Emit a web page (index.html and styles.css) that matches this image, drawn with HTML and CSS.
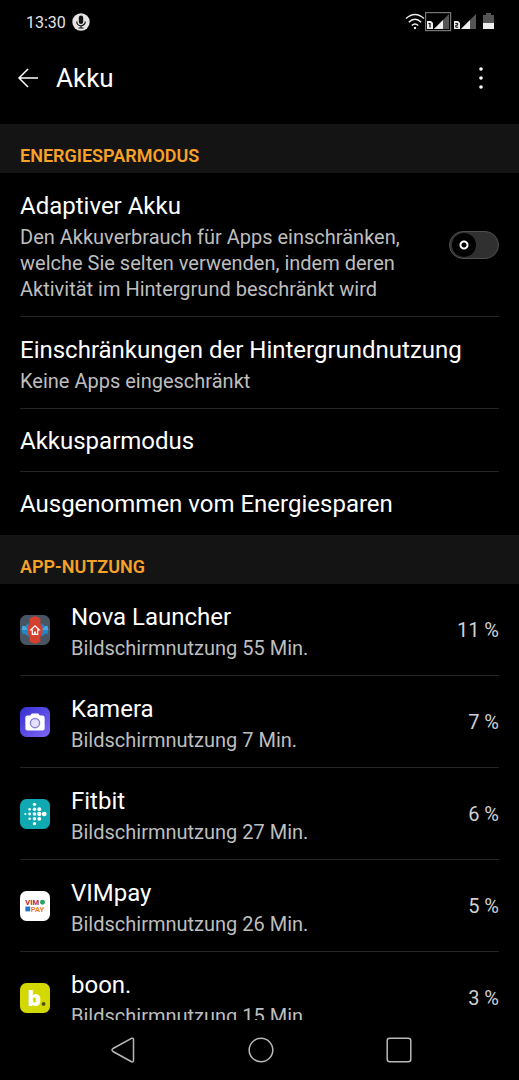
FILE: index.html
```html
<!DOCTYPE html>
<html lang="de">
<head>
    <meta charset="UTF-8">
    <meta name="viewport" content="width=device-width, initial-scale=1">
    <title>Akku</title>
    <link rel="stylesheet" href="styles.css">
</head>
<body>
<div class="status">
    <span class="status_time">13:30</span>
    <svg class="status_mic" width="18" height="18" viewBox="0 0 18 18">
        <circle cx="9" cy="9" r="8.7" fill="#e4e4e4"/>
        <rect x="6.8" y="2.5" width="4.4" height="8.5" rx="2.2" fill="#111"/>
        <path d="M4.7 8.5a4.3 4.3 0 0 0 8.6 0M9 12.8v2.4M6.5 15h5" fill="none" stroke="#111" stroke-width="1.2"/>
    </svg>
    <svg class="status_icons" width="90" height="22" viewBox="0 0 90 22">
        <g fill="none" stroke="#eee" stroke-width="1.5">
            <path d="M1 7.500Q10 -.5 19 7.500"/>
            <path d="M3.800 11.200Q10 5.200 16.200 11.200"/>
            <path d="M6.800 14.500Q10 11.300 13.200 14.500"/>
        </g>
        <circle cx="10" cy="17" r="1.200" fill="#eee"/>
        <rect x="20.600" y="1.600" width="25" height="18" fill="none" stroke="#777" stroke-width="1.200"/>
        <path d="M44 3v15H29z" fill="#555"/>
        <path d="M38 9v9h-9z" fill="#eee"/>
        <path d="M22 10h4l2 2v6h-6z" fill="#eee"/>
        <path d="M23.500 12.500h1.500v4" fill="none" stroke="#000" stroke-width="1.200"/>
        <path d="M71 3v15H56z" fill="#555"/>
        <path d="M65 9v9h-9z" fill="#eee"/>
        <path d="M49 10h4l2 2v6h-6z" fill="#eee"/>
        <path d="M50.300 12.400h2.400v1.800h-1.900v2h2.400" fill="none" stroke="#000" stroke-width="1"/>
        <path d="M81 2h5v2h3v8H78V4h3z" fill="#555"/>
        <path d="M78 12h11v6H78z" fill="#eee"/>
    </svg>
</div>

<header class="bar">
    <button class="bar_btn" aria-label="Zurück">
        <svg width="20" height="20" viewBox="0 0 20 20">
            <path d="M10 1L1 10l9 9M1 10h19" fill="none" stroke="#fff" stroke-width="1.5"/>
        </svg>
    </button>
    <h1>Akku</h1>
    <button class="bar_btn bar_more" aria-label="Mehr">
        <svg width="4" height="22" viewBox="0 0 4 22">
            <g fill="#fff"><circle cx="2" cy="2" r="1.8"/><circle cx="2" cy="11" r="1.8"/><circle cx="2" cy="20" r="1.8"/></g>
        </svg>
    </button>
</header>

<main class="content">
    <h2>ENERGIESPARMODUS</h2>
    <ul class="list">
        <li>
            <div class="text">
                <label class="title" for="adaptive">Adaptiver Akku</label>
                <p class="sub sub_narrow">Den Akkuverbrauch für Apps einschränken, welche Sie selten verwenden, indem deren Aktivität im Hintergrund beschränkt wird</p>
            </div>
            <input class="switch" type="checkbox" id="adaptive">
        </li>
        <li>
            <div class="text">
                <span class="title">Einschränkungen der Hintergrundnutzung</span>
                <p class="sub">Keine Apps eingeschränkt</p>
            </div>
        </li>
        <li class="single"><span class="title">Akkusparmodus</span></li>
        <li class="single"><span class="title">Ausgenommen vom Energiesparen</span></li>
    </ul>

    <h2>APP-NUTZUNG</h2>
    <ul class="list">
        <li>
            <svg class="app_icon" viewBox="0 0 28 28">
                <rect width="28" height="28" rx="6" fill="#465561"/>
                <path d="M1.500 14l1-4 2 .5L8 7.500v13l-3.500-3-2 .5zM26.500 14l-1-4-2 .5L20 7.500v13l3.500-3 2 .5z" fill="#2487c8"/>
                <path d="M1.500 14l1-4 2 .5L8 14zM26.500 14l-1-4-2 .5L20 14z" fill="#4aa8df"/>
                <path d="M9 3l5-2 5 2v5l2 3v6l-2 3v5l-5 2-5-2v-5l-2-3v-6l2-3z" fill="#d5402e"/>
                <path d="M10 14l4-4 4 4h-1.500v4h-5v-4z" fill="none" stroke="#fff" stroke-width="1.1"/>
                <path d="M13.200 15.500h1.600V18h-1.600z" fill="#fff"/>
            </svg>
            <div class="text">
                <span class="title">Nova Launcher</span>
                <p class="sub">Bildschirmnutzung 55 Min.</p>
            </div>
            <span class="percent">11 %</span>
        </li>
        <li>
            <svg class="app_icon" viewBox="0 0 28 28">
                <defs>
                    <linearGradient id="cam" x1="0" y1="0" x2="1" y2="1">
                        <stop offset="0" stop-color="#3431cf"/>
                        <stop offset="1" stop-color="#8066f8"/>
                    </linearGradient>
                </defs>
                <rect width="28" height="28" rx="6" fill="url(#cam)"/>
                <path d="M7 8h2.500l1.500-2h6l1.500 2H21a2 2 0 0 1 2 2v10a2 2 0 0 1-2 2H7a2 2 0 0 1-2-2V10a2 2 0 0 1 2-2z" fill="#fff"/>
                <circle cx="14" cy="15" r="4.300" fill="#e4e2ff" stroke="#8a80dd" stroke-width="1.300"/>
            </svg>
            <div class="text">
                <span class="title">Kamera</span>
                <p class="sub">Bildschirmnutzung 7 Min.</p>
            </div>
            <span class="percent">7 %</span>
        </li>
        <li>
            <svg class="app_icon" viewBox="0 0 28 28">
                <rect width="28" height="28" rx="6" fill="#10a9b2"/>
                <g fill="#fff">
                    <circle cx="5" cy="14" r="1"/>
                    <circle cx="9" cy="9.500" r="1.200"/><circle cx="9" cy="14" r="1.300"/><circle cx="9" cy="18.500" r="1.200"/>
                    <circle cx="13.500" cy="5" r="1.500"/><circle cx="13.500" cy="9.500" r="1.600"/><circle cx="13.500" cy="14" r="1.700"/><circle cx="13.500" cy="18.500" r="1.600"/><circle cx="13.500" cy="23" r="1.500"/>
                    <circle cx="18" cy="9.500" r="1.800"/><circle cx="18" cy="14" r="2"/><circle cx="18" cy="18.500" r="1.800"/>
                    <circle cx="22.600" cy="14" r="2.200"/>
                </g>
            </svg>
            <div class="text">
                <span class="title">Fitbit</span>
                <p class="sub">Bildschirmnutzung 27 Min.</p>
            </div>
            <span class="percent">6 %</span>
        </li>
        <li>
            <svg class="app_icon" viewBox="0 0 28 28">
                <rect width="28" height="28" rx="6" fill="#fff"/>
                <text class="vim" x="5" y="13" fill="#c32035">VIM</text>
                <circle cx="21" cy="10.500" r="2.300" fill="#23a45d"/>
                <rect x="5" y="14.500" width="4.500" height="4.500" fill="#2776c9"/>
                <text class="vim" x="10" y="19.500" fill="#ed7c2e">PAY</text>
            </svg>
            <div class="text">
                <span class="title">VIMpay</span>
                <p class="sub">Bildschirmnutzung 26 Min.</p>
            </div>
            <span class="percent">5 %</span>
        </li>
        <li>
            <svg class="app_icon" viewBox="0 0 28 28">
                <rect width="28" height="28" rx="6" fill="#d3d900"/>
                <text class="boon" x="7" y="21" fill="#fff">b</text>
                <circle cx="22" cy="19.500" r="1.800" fill="#494f16"/>
            </svg>
            <div class="text">
                <span class="title">boon.</span>
                <p class="sub">Bildschirmnutzung 15 Min.</p>
            </div>
            <span class="percent">3 %</span>
        </li>
    </ul>
</main>

<nav class="nav">
    <button aria-label="Zurück">
        <svg width="26" height="26" viewBox="0 0 26 26"><path d="M21.500 1.300L3 11.500q-2 1.500 0 3l18.500 10.200q2 .8 2-1.500V2.800q0-2.200-2-1.500z"/></svg>
    </button>
    <button aria-label="Startbildschirm">
        <svg width="26" height="26" viewBox="0 0 26 26"><circle cx="13" cy="13" r="11.800"/></svg>
    </button>
    <button aria-label="Letzte Apps">
        <svg width="26" height="26" viewBox="0 0 26 26"><rect x="1.200" y="1.200" width="23.600" height="23.600" rx="2.500"/></svg>
    </button>
</nav>
</body>
</html>
```
FILE: styles.css
```css
* {
    margin: 0;
    padding: 0;
    box-sizing: border-box;
    list-style: none;
}

body {
    display: flex;
    flex-direction: column;
    height: 100vh;
    overflow: hidden;
    background: #000;
    color: #fff;
    font-family: Roboto, "Liberation Sans", sans-serif;
}

button {
    background: none;
    border: none;
}

svg {
    display: block;
}

.status {
    flex: none;
    display: flex;
    align-items: center;
    height: 44px;
    padding: 0 24px 0 26px;
}

.status_time {
    font-size: 16px;
    color: #e4e4e4;
}

.status_mic {
    margin-left: 6px;
}

.status_icons {
    margin-left: auto;
}

.bar {
    flex: none;
    display: flex;
    align-items: center;
    height: 80px;
    padding: 0 36px 12px 18px;
}

.bar h1 {
    margin-left: 18px;
    font-size: 26px;
    line-height: 32px;
    font-weight: 400;
}

.bar_more {
    margin-left: auto;
}

.content {
    flex: 1;
    min-height: 0;
    overflow: hidden;
}

h2 {
    height: 49px;
    padding: 20px 20px 0;
    background: #141414;
    color: #f7a128;
    font-size: 18px;
    line-height: 24px;
    font-weight: 600;
}

.list {
    padding: 0 20px;
}

.list li {
    display: flex;
    align-items: center;
    padding: 14px 0;
    border-bottom: 1px solid #262626;
}

.list li:last-child {
    border-bottom-color: transparent;
}

.list .single {
    padding: 17px 0 15px;
}

.text {
    flex: 1;
    padding-top: 4px;
}

.title {
    display: block;
    font-size: 24px;
    line-height: 30px;
}

.sub {
    margin-top: 3px;
    color: #bebebe;
    font-size: 20px;
    line-height: 26px;
}

.sub_narrow {
    max-width: 400px;
}

.switch {
    flex: none;
    appearance: none;
    display: flex;
    align-items: center;
    width: 50px;
    height: 28px;
    padding: 2px;
    border: 1px solid #505050;
    border-radius: 14px;
    background: #303030;
}

.switch::before {
    content: "";
    width: 24px;
    height: 24px;
    border-radius: 50%;
    background: radial-gradient(circle, #000 2px, #fff 3px, #fff 4px, #000 5px);
}

.switch:checked {
    justify-content: flex-end;
    background: #f7a128;
}

.app_icon {
    flex: none;
    width: 30px;
    height: 30px;
    margin-right: 21px;
}

.vim {
    font-size: 7px;
    font-weight: 700;
}

.boon {
    font-family: "Open Sans", sans-serif;
    font-size: 20px;
    font-weight: 800;
}

.percent {
    color: #d0d0d0;
    font-size: 20px;
}

.nav {
    flex: none;
    display: flex;
    justify-content: center;
    align-items: center;
    gap: 112px;
    height: 60px;
    padding-left: 3px;
}

.nav svg {
    fill: none;
    stroke: #b8b8b8;
    stroke-width: 1.5;
}
```
